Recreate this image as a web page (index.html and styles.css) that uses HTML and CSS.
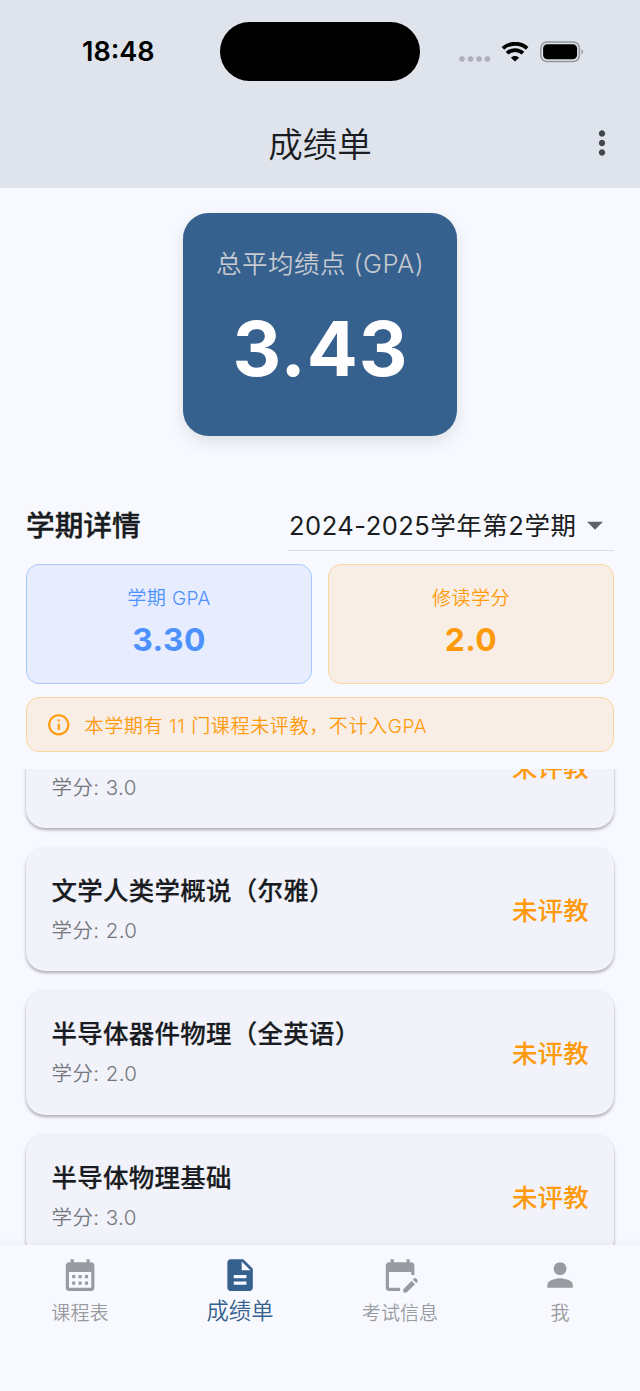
FILE: index.html
```html
<!DOCTYPE html>
<html lang="zh-CN">
<head>
<meta charset="utf-8">
<title>成绩单</title>
<link rel="stylesheet" href="styles.css">
</head>
<body>
<div class="app">
  <header class="header">
    <div class="status">
      <div class="time">18:48</div>
      <div class="island"></div>
      <div class="indicators">
        <svg class="dots" width="32" height="6" viewBox="0 0 32 6"><circle cx="3" cy="3" r="2.8"/><circle cx="11.5" cy="3" r="2.8"/><circle cx="20" cy="3" r="2.8"/><circle cx="28.5" cy="3" r="2.8"/></svg>
        <svg class="wifi" width="28" height="20" viewBox="0 0 28 20"><path d="M1.900 6.400C8.500.2 19.500.2 26.100 6.400" stroke-width="3.800"/><path d="M6 11.100C10.400 7 17.600 7 22 11.100" stroke-width="3.800"/><path class="solid" d="M14 19.600L9.900 15.700C12.100 13.500 15.900 13.500 18.100 15.700Z"/></svg>
        <svg class="battery" width="44" height="22" viewBox="0 0 44 22"><rect x=".8" y="1" width="38.6" height="19.5" rx="6.2" fill="none" stroke="#929599" stroke-width="1.5"/><rect x="3.1" y="3.3" width="34" height="14.9" rx="4.2"/><path d="M41.5 8.3c2 .9 2 4 0 4.9z" fill="#929599"/></svg>
      </div>
    </div>
    <div class="appbar">
      <h1 class="title">成绩单</h1>
      <svg class="more" width="38" height="38" viewBox="0 0 24 24"><path d="M12 8c1.1 0 2-.9 2-2s-.9-2-2-2-2 .9-2 2 .9 2 2 2zm0 2c-1.1 0-2 .9-2 2s.9 2 2 2 2-.9 2-2-.9-2-2-2zm0 6c-1.1 0-2 .9-2 2s.9 2 2 2 2-.9 2-2-.9-2-2-2z"/></svg>
    </div>
  </header>

  <section class="gpa-card">
    <div class="gpa-label">总平均绩点 (GPA)</div>
    <div class="gpa-value">3.43</div>
  </section>

  <section class="term">
    <div class="term-head">
      <h2 class="term-title">学期详情</h2>
      <div class="select">
        <span>2024-2025学年第2学期</span>
        <svg width="38" height="38" viewBox="0 0 24 24"><path d="M7 10l5 5 5-5z"/></svg>
      </div>
    </div>
    <div class="stats">
      <div class="stat blue"><div class="stat-label">学期 GPA</div><div class="stat-value">3.30</div></div>
      <div class="stat orange"><div class="stat-label">修读学分</div><div class="stat-value">2.0</div></div>
    </div>
    <div class="notice orange">
      <svg width="25.5" height="25.5" viewBox="0 0 24 24"><path d="M11 7h2v2h-2zm0 4h2v6h-2zm1-9C6.48 2 2 6.48 2 12s4.48 10 10 10 10-4.48 10-10S17.52 2 12 2zm0 18c-4.41 0-8-3.59-8-8s3.59-8 8-8 8 3.59 8 8-3.59 8-8 8z"/></svg>
      <span>本学期有 11 门课程未评教，不计入GPA</span>
    </div>
  </section>

  <main class="list">
    <div class="courses">
      <article class="course"><div><h3 class="name"></h3><p class="credit">学分: 3.0</p></div><span class="state">未评教</span></article>
      <article class="course"><div><h3 class="name">文学人类学概说（尔雅）</h3><p class="credit">学分: 2.0</p></div><span class="state">未评教</span></article>
      <article class="course"><div><h3 class="name">半导体器件物理（全英语）</h3><p class="credit">学分: 2.0</p></div><span class="state">未评教</span></article>
      <article class="course"><div><h3 class="name">半导体物理基础</h3><p class="credit">学分: 3.0</p></div><span class="state">未评教</span></article>
    </div>
  </main>

  <nav class="nav">
    <a class="tab"><svg width="38.2" height="38.2" viewBox="0 0 24 24"><path d="M19 4h-1V2h-2v2H8V2H6v2H5c-1.11 0-1.99.9-1.99 2L3 20c0 1.1.89 2 2 2h14c1.1 0 2-.9 2-2V6c0-1.1-.9-2-2-2zm0 16H5V10h14v10zM9 14H7v-2h2v2zm4 0h-2v-2h2v2zm4 0h-2v-2h2v2zm-8 4H7v-2h2v2zm4 0h-2v-2h2v2zm4 0h-2v-2h2v2z"/></svg><span>课程表</span></a>
    <a class="tab active"><svg width="38.2" height="38.2" viewBox="0 0 24 24"><path d="M14 2H6c-1.1 0-1.99.9-1.99 2L4 20c0 1.1.89 2 1.99 2H18c1.1 0 2-.9 2-2V8l-6-6zm2 16H8v-2h8v2zm0-4H8v-2h8v2zm-3-5V3.5L18.500 9H13z"/></svg><span>成绩单</span></a>
    <a class="tab"><svg width="38.2" height="38.2" viewBox="0 0 24 24"><path d="M12 22H5c-1.11 0-2-.9-2-2L3.010 6c0-1.1.88-2 1.990-2h1V2h2v2h8V2h2v2h1c1.100 0 2 .9 2 2v6h-2v-2H5v10h7v2zm10.130-5.010.71-.71c.39-.39.39-1.020 0-1.410l-.71-.71c-.39-.39-1.020-.39-1.410 0l-.71.71 2.120 2.120zm-.71.71-5.300 5.300H14v-2.120l5.300-5.300 2.120 2.120z"/></svg><span>考试信息</span></a>
    <a class="tab"><svg width="38.2" height="38.2" viewBox="0 0 24 24"><path d="M12 12c2.210 0 4-1.790 4-4s-1.790-4-4-4-4 1.790-4 4 1.790 4 4 4zm0 2c-2.670 0-8 1.340-8 4v2h16v-2c0-2.660-5.330-4-8-4z"/></svg><span>我</span></a>
  </nav>
</div>
</body>
</html>
```

FILE: styles.css
```css
* { box-sizing: border-box; margin: 0; padding: 0; }
body { background: #f8f9ff; color: #191c20; font-family: Inter, "Noto Sans CJK SC", sans-serif; font-weight: 350; }
svg { display: block; flex: none; }
.app { display: flex; flex-direction: column; width: 640px; height: 1391px; overflow: hidden; }
.header { height: 187.500px; flex: none; background: #dfe3ec; }
.status { display: grid; grid-template-columns: 220px 200px 220px; height: 100px; padding-top: 22px; }
.time { padding-left: 82px; font-size: 27px; line-height: 60px; font-weight: 600; color: #000; letter-spacing: 0; }
.island { height: 58.500px; border-radius: 30px; background: #000; }
.indicators { display: flex; height: 59px; padding-left: 38.500px; align-items: center; }
.dots { fill: #adb0b8; margin-top: 14px; }
.wifi { margin-left: 10.500px; fill: none; stroke: #000; }
.wifi .solid { fill: #000; stroke: none; }
.battery { margin-left: 11px; }
.appbar { display: grid; grid-template-columns: 82px 1fr 82px; height: 87px; align-items: center; }
.title { grid-column: 2; padding-top: 2px; text-align: center; font-size: 34.500px; line-height: 48px; font-weight: 350; }
.more { justify-self: center; margin: -1px 0 0 5px; fill: #42474e; }
.gpa-card { flex: none; align-self: center; width: 273.500px; height: 222.500px; margin-top: 25.500px; padding-top: 32px; border-radius: 25.500px; background: #36618e; box-shadow: 0 6px 16px rgba(0,0,0,.1); text-align: center; }
.gpa-label { font-size: 25.500px; line-height: 37px; letter-spacing: .5px; color: #c6c9d0; }
.gpa-value { margin-top: 21px; padding-left: 1px; font-size: 75.500px; line-height: 92px; font-weight: 680; letter-spacing: 1px; color: #fff; }
.term { flex: none; margin-top: 64.500px; padding: 0 26px; }
.term-head { display: flex; justify-content: space-between; height: 51px; }
.term-title { font-size: 28.700px; line-height: 52px; font-weight: 500; -webkit-text-stroke: .35px currentColor; }
.select { display: flex; width: 326px; justify-content: space-between; align-items: center; padding-left: 1px; border-bottom: 1.500px solid #dcdee3; font-size: 25.500px; font-weight: 400; letter-spacing: .5px; white-space: nowrap; }
.select span { padding-bottom: 4px; }
.select svg { fill: #5f6267; }
.stats { display: grid; grid-template-columns: 1fr 1fr; gap: 16px; margin-top: 12.500px; }
.stat { height: 120.500px; padding-top: 19.500px; border: 1.500px solid; border-radius: 13px; text-align: center; }
.blue { background: #e7edfe; border-color: #a6c8fb; color: #4d91ff; }
.orange { background: #f9eee5; border-color: #fad5a0; color: #ff9a0c; }
.stat-label { font-size: 19.100px; line-height: 28px; letter-spacing: .35px; }
.stat-value { margin-top: 7px; font-size: 31.800px; line-height: 42px; font-weight: 680; letter-spacing: .5px; }
.notice { display: flex; align-items: center; gap: 13px; height: 55.500px; margin-top: 12.500px; padding-left: 19px; border: 1.500px solid #fad5a0; border-radius: 13px; font-size: 19.100px; letter-spacing: .57px; white-space: nowrap; }
.notice span { padding-top: 1px; }
.notice svg { fill: currentColor; }
.list { flex: 1; min-height: 0; margin-top: 16.500px; overflow: hidden; }
.courses { display: flex; flex-direction: column; gap: 19px; margin-top: -65px; padding: 0 26px; }
.course { display: flex; flex: none; justify-content: space-between; align-items: center; height: 124.400px; padding: 0 25px 0 25.500px; border-radius: 19px; background: #f1f2fa; box-shadow: 0 2px 3px rgba(0,0,0,.27), 0 2px 5px rgba(0,0,0,.06); }
.name { height: 38px; font-size: 25.500px; line-height: 40px; font-weight: 500; letter-spacing: .25px; -webkit-text-stroke: .2px currentColor; }
.credit { margin-top: 5px; font-size: 20.500px; line-height: 33px; letter-spacing: .4px; color: #74777c; }
.state { padding-bottom: 1px; font-size: 25.500px; font-weight: 500; letter-spacing: .2px; color: #ff9a0c; }
.nav { display: grid; grid-template-columns: repeat(4, 1fr); flex: none; height: 146.500px; padding-top: 11px; background: #f8f9ff; box-shadow: 0 -2px 8px rgba(0,0,0,.04); z-index: 1; }
.tab { display: flex; flex-direction: column; align-items: center; color: #999ba0; font-size: 19.100px; line-height: 28px; }
.tab svg { fill: currentColor; }
.tab span { margin-top: 5px; }
.active { color: #36618e; font-size: 22.300px; }
.active span { margin-top: 3px; }
```
